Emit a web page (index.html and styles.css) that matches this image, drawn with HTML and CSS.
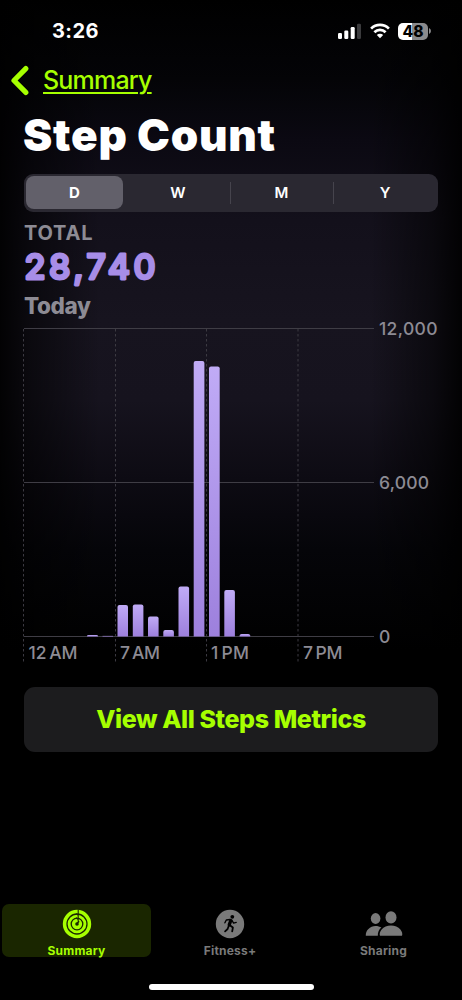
FILE: index.html
```html
<!DOCTYPE html>
<html lang="en">
<head>
  <meta charset="UTF-8">
  <meta name="viewport" content="width=device-width, initial-scale=1">
  <title>Step Count</title>
  <link rel="stylesheet" href="styles.css">
</head>
<body>

<div class="screen">
  <div class="status-bar">
    <span class="time">3:26</span>
    <div class="status-icons">
      <svg class="signal" width="24" height="16" viewBox="0 0 24 16" fill="#fff">
        <rect x="0" y="10" width="4" height="6" rx="1.2"/>
        <rect x="6.3" y="7.5" width="4" height="8.5" rx="1.2"/>
        <rect x="12.7" y="4" width="4" height="12" rx="1.2"/>
        <rect x="19" y="0.8" width="4" height="15.2" rx="1.2" fill="#3b3b3d"/>
      </svg>
      <svg class="wifi" width="20" height="16" viewBox="0 0 20 16" fill="none" stroke="#fff" stroke-width="2.7">
        <path d="M1.1 5.6a12.6 12.6 0 0 1 17.8 0"/>
        <path d="M4.4 9.2a7.9 7.9 0 0 1 11.2 0"/>
        <path d="M10 15.3 6.8 12.1a4.5 4.5 0 0 1 6.4 0z" fill="#fff" stroke="none"/>
      </svg>
      <div class="battery"><span>48</span></div>
      <svg class="battery-cap" width="2" height="6" viewBox="0 0 2 6"><path d="M0 0q2 1 2 3t-2 3z" fill="#8a8a8c"/></svg>
    </div>
  </div>

  <div class="nav">
    <svg width="20" height="31" viewBox="0 0 20 31" fill="none" stroke="#a6ff00" stroke-width="5.2" stroke-linecap="round" stroke-linejoin="round">
      <path d="M15.8 3.6 4 15.5l11.8 11.9"/>
    </svg>
    <a href="#" class="back">Summary</a>
  </div>

  <h1 class="title">Step Count</h1>

  <div class="segments">
    <button class="segment active">D</button>
    <button class="segment">W</button>
    <button class="segment divided">M</button>
    <button class="segment divided">Y</button>
  </div>

  <div class="total">
    <p class="total-label">TOTAL</p>
    <!-- svg text so the stroke joins round off the digits -->
    <svg class="total-value" width="140" height="43" viewBox="0 0 140 43">
      <text x="0.5" y="31.7" textLength="131">28,740</text>
    </svg>
    <p class="total-day">Today</p>
  </div>

  <svg class="chart" width="446" height="353" viewBox="0 312 446 353">
    <defs>
      <linearGradient id="bar" x1="0" y1="0" x2="0" y2="1">
        <stop offset="0" stop-color="#c0abf6"/>
        <stop offset="1" stop-color="#9d80dd"/>
      </linearGradient>
    </defs>
    <!-- hour lines -->
    <g class="hours">
      <path d="M23.5 329V663M115.5 329V663M206.5 329V663M298 329V663"/>
    </g>
    <!-- value lines -->
    <g class="values">
      <path d="M24 328.5H374M24 482.5H374M24 636.5H374"/>
    </g>
    <g fill="url(#bar)">
      <path d="M87 636.5v-.5q0-1 1.5-1h8q1.5 0 1.5 1v.5z"/>
      <path d="M102.5 636.5v-.6h10.5v.6z"/>
      <path d="M117.5 636.5V607q0-2 2-2h6.5q2 0 2 2v29.5z"/>
      <path d="M132.8 636.5V606.5q0-2 2-2h6.6q2 0 2 2v30z"/>
      <path d="M148 636.5V618.5q0-2 2-2h6.6q2 0 2 2v18z"/>
      <path d="M163.3 636.5V632q0-2 2-2h6.6q2 0 2 2v4.5z"/>
      <path d="M178.5 636.5V588.5q0-2 2-2h6.6q2 0 2 2v48z"/>
      <path d="M193.7 636.5V363q0-2 2-2h6.7q2 0 2 2v273.5z"/>
      <path d="M209 636.5V368.5q0-2 2-2h6.7q2 0 2 2v268z"/>
      <path d="M224.3 636.5V592q0-2 2-2h6.6q2 0 2 2v44.5z"/>
      <path d="M239.6 636.5V635.5q0-1.5 2-1.5h6.6q2 0 2 1.5v1z"/>
    </g>
    <g class="axis">
      <text x="379" y="335" textLength="58.5">12,000</text>
      <text x="379" y="489" textLength="50">6,000</text>
      <text x="379" y="643">0</text>
      <text class="hour" x="28.5" y="658.5" textLength="49">12 AM</text>
      <text class="hour" x="120" y="658.5" textLength="40">7 AM</text>
      <text class="hour" x="211" y="658.5" textLength="38">1 PM</text>
      <text class="hour" x="303" y="658.5" textLength="39.5">7 PM</text>
    </g>
  </svg>

  <button class="metrics">View All Steps Metrics</button>

  <div class="tabs">
    <div class="tab selected">
      <svg width="30" height="30" viewBox="0 0 30 30">
        <circle cx="15" cy="15" r="14.2" fill="#a6ff00"/>
        <g fill="none" stroke="#1a2600" stroke-width="1.3">
          <circle cx="15" cy="15" r="10"/>
          <circle cx="15" cy="15" r="5.8"/>
        </g>
        <circle cx="15" cy="15" r="1.8" fill="#1a2600"/>
        <path d="M16.2.5V14M14 4.6l2.2 1.8M14 8.8l2.2 1.8M15 14l2.3-1.5" fill="none" stroke="#1a2600" stroke-width="1.1"/>
      </svg>
      <span>Summary</span>
    </div>
    <div class="tab">
      <svg width="30" height="30" viewBox="0 0 30 30">
        <circle cx="15" cy="15" r="14.2" fill="#7a7a7a"/>
        <circle cx="17.3" cy="7.8" r="1.9" fill="#000"/>
        <g fill="none" stroke="#000" stroke-linecap="round" stroke-linejoin="round">
          <path d="M15.8 11.5 14.2 15.8" stroke-width="3.3"/>
          <path d="M15 10.5 11.3 11 9.9 13.8M17 11.5l1.6 2.6 2.6-.7" stroke-width="1.4"/>
          <path d="M14.8 16.2 17.9 18.5 17.2 22.3M13.6 17.2 12.6 20 10.1 22.3" stroke-width="1.8"/>
        </g>
      </svg>
      <span>Fitness+</span>
    </div>
    <div class="tab">
      <svg width="38" height="30" viewBox="0 0 38 30" fill="#7a7a7a">
        <ellipse cx="10.6" cy="9.5" rx="4.8" ry="5.4"/>
        <ellipse cx="26" cy="8.4" rx="5.5" ry="6.2"/>
        <path d="M.8 26.8C.4 21.5 5 17 10.6 17c2.2 0 4.2.5 5.8 1.6-2.4 2-3.7 4.6-3.6 8.2z"/>
        <path d="M15 26.8c-.7-1.5-.2-4 1.6-6.2 2.2-2.8 5.6-4.2 9.4-4.2s7.2 1.4 9.4 4.2c1.8 2.2 2.3 4.7 1.6 6.2z"/>
      </svg>
      <span>Sharing</span>
    </div>
  </div>

  <div class="home-indicator"></div>
</div>

</body>
</html>
```

FILE: styles.css
```css
* {
  box-sizing: border-box;
  margin: 0;
  padding: 0;
}
body {
  background: #000;
  font-family: Inter, 'Liberation Sans', sans-serif;
  color: #fff;
}
button {
  border: none;
  background: none;
  font-family: inherit;
  color: inherit;
}
.screen {
  width: 462px;
  height: 1000px;
  display: flex;
  flex-direction: column;
  overflow: hidden;
  background:
    linear-gradient(90deg, rgba(0,0,0,0.9) 0, rgba(0,0,0,0.55) 28px, transparent 100px, transparent 370px, rgba(0,0,0,0.5) 432px, rgba(0,0,0,0.9) 462px),
    linear-gradient(180deg, #000 0, #040407 80px, #0b0912 140px, #13101b 220px, #17141f 320px, #16131e 400px, #0d0b13 480px, #050509 550px, #000 650px);
}
.status-bar {
  height: 60px;
  padding: 2px 31px 0 52px;
  display: flex;
  align-items: center;
  justify-content: space-between;
}
.time {
  font-size: 20px;
  font-weight: 700;
  letter-spacing: 0.4px;
}
.status-icons {
  display: flex;
  align-items: center;
}
.wifi {
  margin: 0 8px 0 8px;
}
.battery {
  width: 30px;
  height: 17px;
  border-radius: 5px;
  background: linear-gradient(90deg, #fff 48%, #8a8a8c 48%);
  color: #000;
  font-size: 15.5px;
  font-weight: 800;
  line-height: 17px;
  text-align: center;
}
.battery-cap {
  margin-left: 1px;
}
.nav {
  height: 42px;
  padding: 0 0 2px 10px;
  display: flex;
  align-items: center;
  gap: 13px;
}
.back {
  font-size: 25px;
  font-weight: 500;
  letter-spacing: -0.8px;
  color: #a6ff00;
  text-decoration-thickness: 2px;
  text-underline-offset: 3px;
}
.title {
  height: 72px;
  padding-left: 23px;
  font-size: 44px;
  font-weight: 900;
  line-height: 66px;
  letter-spacing: 0.75px;
}
.segments {
  height: 38px;
  margin: 0 24px;
  padding: 2px 1px 3px 2px;
  display: flex;
  border-radius: 9px;
  background: #2a2831;
}
.segment {
  flex: 1;
  font-size: 15px;
  font-weight: 600;
}
.segment.active {
  margin-right: 3px;
  flex: 0 0 97px;
  border-radius: 8px;
  background: #62606a;
  font-weight: 700;
}
.segment.divided {
  background: linear-gradient(#46444d, #46444d) left center / 1px 22px no-repeat;
}
.total {
  height: 100px;
  padding: 8px 24px 0;
  color: #8d8b94;
  font-weight: 700;
}
.total-label {
  font-size: 20px;
  line-height: 26px;
  letter-spacing: 0.8px;
}
.total-value {
  display: block;
  margin-top: 1px;
  font-size: 34px;
  font-weight: 500;
  fill: #a78de8;
  stroke: #a78de8;
  stroke-width: 2.8;
  stroke-linejoin: round;
}
.total-day {
  font-size: 22.5px;
  font-weight: 800;
  line-height: 31px;
  letter-spacing: -0.4px;
}
.chart {
  display: block;
  flex: none;
}
.hours path {
  fill: none;
  stroke: #3c3a42;
  stroke-width: 1;
  stroke-dasharray: 2.5 2.5;
}
.values path {
  stroke: #3f3d45;
  stroke-width: 1;
}
.axis {
  fill: #8d8b94;
  font-size: 17.5px;
  font-weight: 500;
}
.hour {
  word-spacing: -2px;
}
.metrics {
  height: 65px;
  margin: 22px 24px 0;
  padding-bottom: 1px;
  flex: none;
  border-radius: 11px;
  background: #1c1c1e;
  color: #a6ff00;
  font-size: 25px;
  font-weight: 800;
  letter-spacing: -0.4px;
}
.tabs {
  margin-top: 152px;
  padding: 0 4px 0 2px;
  display: flex;
  justify-content: space-between;
}
.tab {
  width: 149px;
  height: 53px;
  padding-top: 5px;
  display: flex;
  flex-direction: column;
  align-items: center;
  border-radius: 7px;
  color: #7a7a7a;
  font-size: 12px;
  font-weight: 700;
  line-height: 24px;
  letter-spacing: 0.2px;
}
.tab svg {
  flex: none;
}
.tab.selected {
  background: #1a2600;
  color: #a6ff00;
}
.home-indicator {
  width: 165px;
  height: 6px;
  margin: 27px auto 0;
  border-radius: 3px;
  background: #fff;
}
```
